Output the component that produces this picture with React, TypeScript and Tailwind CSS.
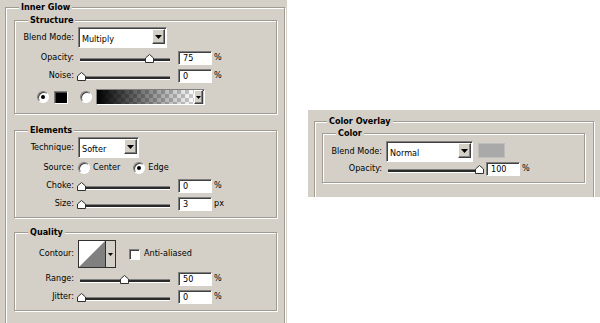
import React from 'react';

const FONT = "font-['DejaVu_Sans_Condensed','DejaVu_Sans',sans-serif] font-stretch-condensed";
const SUNKEN = 'border border-t-[#808080] border-l-[#808080] border-b-white border-r-white shadow-[inset_1px_1px_0_#404040]';
const RAISED = 'border border-t-white border-l-white border-b-[#404040] border-r-[#404040] shadow-[inset_-1px_-1px_0_#808080]';

function Group({ title, className = '', legendClass = 'ml-[13px]', children }: { title: string; className?: string; legendClass?: string; children: React.ReactNode }) {
  return (
    <fieldset className={`border border-[#a09c94] shadow-[inset_1px_1px_0_#fff,1px_1px_0_#fff] ${className}`}>
      <legend className={`px-[2px] bg-[#d4d0c8] text-[9px] leading-[12px] font-bold text-black ${legendClass}`}>{title}</legend>
      {children}
    </fieldset>
  );
}

function Row({ label, className = 'h-[18px]', children }: { label: string; className?: string; children: React.ReactNode }) {
  return (
    <div className={`flex items-center ${className}`}>
      <span className="w-[59px] text-right whitespace-nowrap">{label}</span>
      <div className="ml-[4px] flex items-center h-full">{children}</div>
    </div>
  );
}

function Arrow() {
  return (
    <svg width="7" height="4" viewBox="0 0 7 4">
      <path d="M0 0H7L3.5 4Z" fill="#000" />
    </svg>
  );
}

function Select({ value, w }: { value: string; w: string }) {
  return (
    <div className={`flex h-[21px] bg-white ${SUNKEN} ${w}`}>
      <span className="flex-1 pl-[3px] pt-[4px] leading-[14px] whitespace-nowrap">{value}</span>
      <div className={`mt-[1px] mr-[1px] w-[13px] h-[15px] bg-[#d4d0c8] flex items-center justify-center ${RAISED}`}>
        <Arrow />
      </div>
    </div>
  );
}

function Thumb() {
  return (
    <svg width="9" height="9" viewBox="0 0 9 9">
      <path d="M0.5 8.5V4L4.5 0.5L8.5 4V8.5Z" fill="#fff" stroke="#303030" strokeWidth="1" />
    </svg>
  );
}

function Slider({ thumb }: { thumb: string }) {
  return (
    <div className="relative w-[94px] h-[18px] px-[2px] pt-[9px]">
      <div className="h-[4px] border-t border-t-[#808080] border-b border-b-white bg-[#2a2a2a]" />
      <div className={`absolute top-[5px] ${thumb}`}>
        <Thumb />
      </div>
    </div>
  );
}

function Field({ value }: { value: string }) {
  return (
    <div className={`ml-[6px] w-[34px] h-[14px] bg-white pl-[4px] leading-[12px] ${SUNKEN}`}>{value}</div>
  );
}

function SliderRow({ label, thumb, value, unit = '%' }: { label: string; thumb: string; value: string; unit?: string }) {
  return (
    <Row label={label}>
      <Slider thumb={thumb} />
      <Field value={value} />
      <span className="ml-[2px]">{unit}</span>
    </Row>
  );
}

function Radio({ checked = false, className = '' }: { checked?: boolean; className?: string }) {
  return (
    <div className={`w-[12px] h-[12px] rounded-full bg-white flex items-center justify-center ${SUNKEN} ${className}`}>
      {checked && <div className="w-[4px] h-[4px] rounded-full bg-black" />}
    </div>
  );
}

function GradientSwatch() {
  return (
    <div className={`ml-[4px] flex h-[16px] w-[109px] ${SUNKEN}`}>
      <svg width="97" height="14" viewBox="0 0 97 14" className="block">
        <defs>
          <pattern id="chk" width="8" height="8" patternUnits="userSpaceOnUse">
            <rect width="8" height="8" fill="#fff" />
            <rect width="4" height="4" fill="#cccccc" />
            <rect x="4" y="4" width="4" height="4" fill="#cccccc" />
          </pattern>
          <linearGradient id="fade" x1="0" x2="1" y1="0" y2="0">
            <stop offset="0" stopColor="#000" stopOpacity="1" />
            <stop offset="1" stopColor="#000" stopOpacity="0" />
          </linearGradient>
        </defs>
        <rect width="97" height="14" fill="url(#chk)" />
        <rect width="97" height="14" fill="url(#fade)" />
      </svg>
      <div className={`w-[9px] h-full bg-[#d4d0c8] flex items-center justify-center ${RAISED}`}>
        <svg width="5" height="3" viewBox="0 0 5 3"><path d="M0 0H5L2.5 3Z" fill="#000" /></svg>
      </div>
    </div>
  );
}

function Contour() {
  return (
    <div className="flex h-[28px] w-[38px] border border-[#303030] bg-[#d4d0c8]">
      <svg width="26" height="26" viewBox="0 0 26 26" className="block bg-white">
        <path d="M0 26L26 0V26Z" fill="#808080" />
      </svg>
      <div className="flex-1 border-l border-[#303030] flex items-center justify-center">
        <svg width="5" height="3" viewBox="0 0 5 3"><path d="M0 0H5L2.5 3Z" fill="#000" /></svg>
      </div>
    </div>
  );
}

export default function App() {
  return (
    <div className={`flex w-[600px] h-[323px] overflow-hidden bg-white text-[9px] text-black ${FONT}`}>
      {/* Left: Inner Glow */}
      <div className="w-[287px] h-[323px] shrink-0 bg-[#d4d0c8] pl-[5px] pt-[1px] overflow-hidden">
        <Group title="Inner Glow" className="w-[280px] pb-[40px]">
          <Group title="Structure" className="ml-[8px] mt-[1px] w-[263px] pb-[7px]">
            <Row label="Blend Mode:" className="h-[21px] mt-[1px]">
              <Select value="Multiply" w="w-[89px]" />
            </Row>
            <div className="mt-[1px]">
              <SliderRow label="Opacity:" thumb="left-[67px]" value="75" />
            </div>
            <SliderRow label="Noise:" thumb="left-[-1px]" value="0" />
            <div className="mt-[3px] flex items-center h-[18px] pl-[22px]">
              <Radio checked />
              <div className={`ml-[5px] w-[14px] h-[13px] bg-black ${SUNKEN}`} />
              <Radio className="ml-[12px]" />
              <GradientSwatch />
            </div>
          </Group>

          <Group title="Elements" className="ml-[8px] mt-[10px] w-[263px] pb-[4px]">
            <Row label="Technique:" className="h-[21px] mt-[1px]">
              <Select value="Softer" w="w-[61px]" />
            </Row>
            <Row label="Source:" className="h-[18px] mt-[1px]">
              <Radio />
              <span className="ml-[3px]">Center</span>
              <Radio checked className="ml-[13px]" />
              <span className="ml-[3px]">Edge</span>
            </Row>
            <SliderRow label="Choke:" thumb="left-[-1px]" value="0" />
            <SliderRow label="Size:" thumb="left-[-1px]" value="3" unit="px" />
          </Group>

          <Group title="Quality" className="ml-[8px] mt-[8px] w-[263px] pb-[4px]">
            <Row label="Contour:" className="h-[28px] mt-[2px]">
              <Contour />
              <div className={`ml-[13px] w-[11px] h-[11px] bg-white ${SUNKEN}`} />
              <span className="ml-[4px]">Anti-aliased</span>
            </Row>
            <div className="mt-[2px]">
              <SliderRow label="Range:" thumb="left-[42px]" value="50" />
            </div>
            <SliderRow label="Jitter:" thumb="left-[-1px]" value="0" />
          </Group>
        </Group>
      </div>

      {/* Right: Color Overlay */}
      <div className="flex-1 pt-[110px] pl-[21px]">
        <div className="w-[292px] h-[87px] bg-[#d4d0c8] pl-[6px] pt-[5px] overflow-hidden">
          <Group title="Color Overlay" legendClass="ml-[12px]" className="w-[280px] pb-[30px]">
            <Group title="Color" className="ml-[7px] w-[263px] pb-[4px]">
              <Row label="Blend Mode:" className="h-[21px] mt-[2px]">
                <Select value="Normal" w="w-[87px]" />
                <div className="ml-[5px] self-start mt-[2px] w-[27px] h-[15px] bg-[#a9a9a9] border border-[#bdbdbd]" />
              </Row>
              <div className="-mt-[2px]">
                <SliderRow label="Opacity:" thumb="left-[89px]" value="100" />
              </div>
            </Group>
          </Group>
        </div>
      </div>
    </div>
  );
}
